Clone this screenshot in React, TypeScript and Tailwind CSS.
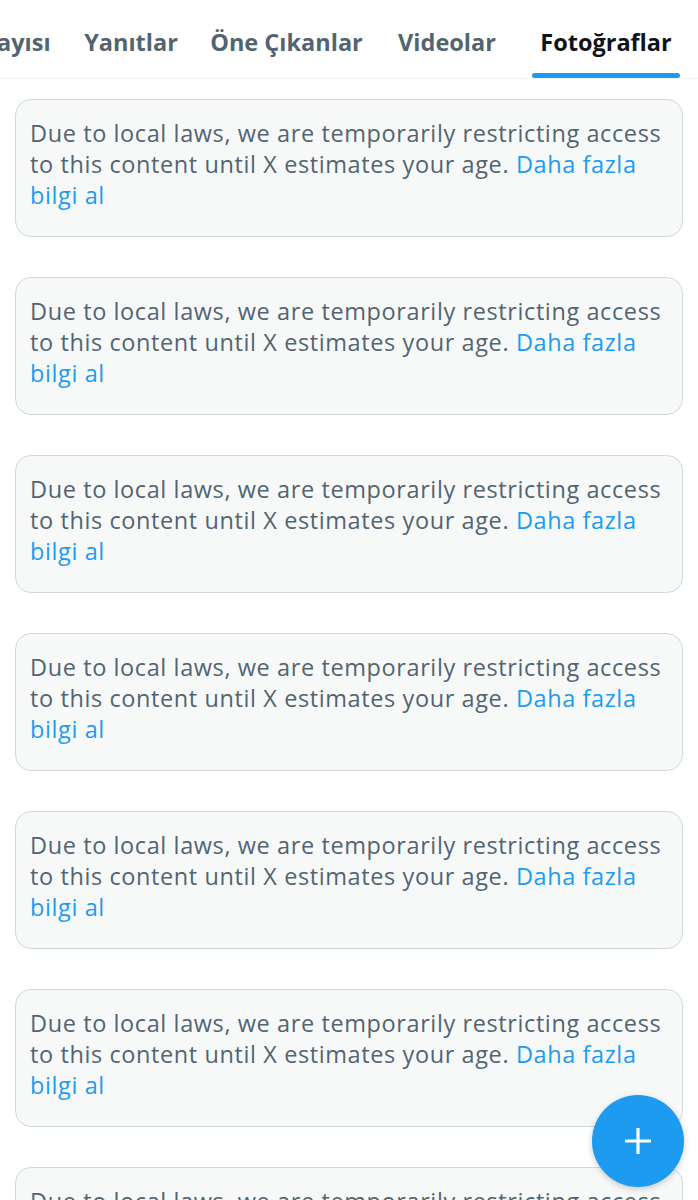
import React from 'react';

const tabs = [
  { label: 'ayısı', w: 'w-[46px]', gap: 'ml-[-3px]', active: false },
  { label: 'Yanıtlar', w: 'w-[94px]', gap: 'ml-[41px]', active: false },
  { label: 'Öne Çıkanlar', w: 'w-[157px]', gap: 'ml-[30px]', active: false },
  { label: 'Videolar', w: 'w-[102px]', gap: 'ml-[31px]', active: false },
  { label: 'Fotoğraflar', w: 'w-[136px]', gap: 'ml-[34px]', active: true },
];

const RestrictedCard: React.FC = () => (
  <div className="mx-[15px] rounded-[16px] border border-[#cfd9de] bg-[#f7f9f9] pl-[14px] pr-[8px] pt-[18px] pb-[25px]">
    <p className="whitespace-nowrap text-[23.5px] leading-[31px] tracking-[0.6px] text-[#536471]">
      Due to local laws, we are temporarily restricting access
      <br />
      to this content until X estimates your age.{' '}
      <span className="text-[#1d9bf0]">Daha fazla</span>
      <br />
      <span className="text-[#1d9bf0]">bilgi al</span>
    </p>
  </div>
);

const App: React.FC = () => {
  return (
    <div className="relative h-[1200px] w-[698px] overflow-hidden bg-white font-['Open_Sans',sans-serif]">
      {/* Tabs */}
      <div className="flex h-[79px] items-stretch border-b border-[#eff3f4]">
        {tabs.map((tab) => (
          <div key={tab.label} className={`flex flex-col items-center ${tab.gap}`}>
            <div className="flex flex-1 items-center justify-center pt-[13px]">
              <span
                className={
                  tab.active
                    ? `${tab.w} whitespace-nowrap text-center text-[23.5px] font-bold text-[#0f1419]`
                    : `${tab.w} whitespace-nowrap text-center text-[23.5px] font-bold text-[#536471]`
                }
              >
                {tab.label}
              </span>
            </div>
            {tab.active ? (
              <div className="h-[5px] w-[148px] rounded-full bg-[#1d9bf0]" />
            ) : (
              <div className="h-[5px]" />
            )}
          </div>
        ))}
      </div>

      {/* Feed */}
      <div className="flex flex-col gap-[40px] pt-[20px]">
        {Array.from({ length: 7 }).map((_, i) => (
          <RestrictedCard key={i} />
        ))}
      </div>

      {/* Compose button */}
      <button className="absolute left-[592px] top-[1095px] flex h-[92px] w-[92px] items-center justify-center rounded-full bg-[#1d9bf0] shadow-[0_2px_6px_rgba(0,0,0,0.2)]">
        <svg width="30" height="30" viewBox="0 0 30 30">
          <path d="M15 2v26M2 15h26" stroke="white" strokeWidth="3.2" />
        </svg>
      </button>
    </div>
  );
};

export default App;
